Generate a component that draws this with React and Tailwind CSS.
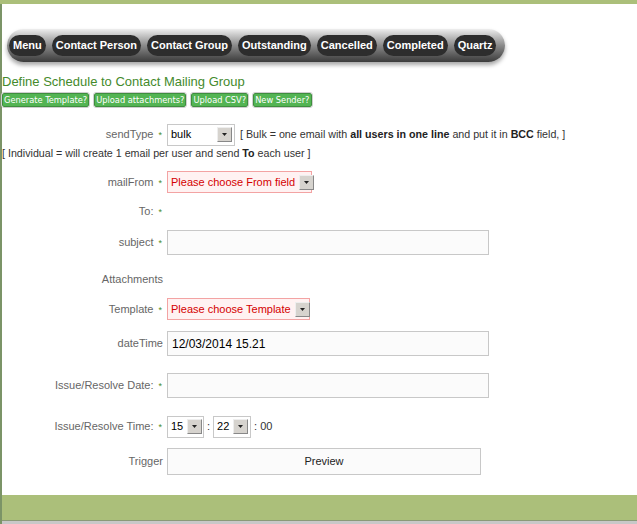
import React from "react";

const navItems = ["Menu", "Contact Person", "Contact Group", "Outstanding", "Cancelled", "Completed", "Quartz"];
const helpButtons = ["Generate Template?", "Upload attachments?", "Upload CSV?", "New Sender?"];

function Star() {
	return <span className="ml-[5px] mr-[2px] text-[9px] text-[#4a8c2a]">*</span>;
}

function Label({ text, star }) {
	return (
		<div className="w-[162px] shrink-0 text-right text-[11px] text-[#666]">
			{text}
			{star ? <Star /> : <span className="mr-[1px]" />}
		</div>
	);
}

function Arrow() {
	return (
		<span className="flex h-[15px] w-[15px] shrink-0 items-center justify-center border border-t-[#eee] border-l-[#eee] border-r-[#888] border-b-[#888] bg-[#d6d3ce]">
			<svg width="5" height="3" viewBox="0 0 5 3">
				<path d="M0 0h5L2.5 3z" fill="#222" />
			</svg>
		</span>
	);
}

function Select({ value, width, error }) {
	return (
		<div
			className={
				"flex h-[22px] items-center justify-between border pl-[3px] pr-[2px] text-[11px] " +
				(error ? "border-[#f3a3a3] bg-[#fff2f2] text-[#d40000]" : "border-[#c8c8c8] bg-white text-black")
			}
			style={{ width }}
		>
			<span className="mr-[4px] whitespace-nowrap">{value}</span>
			<Arrow />
		</div>
	);
}

function TextInput({ value }) {
	return (
		<div className="flex h-[25px] w-[322px] items-center border border-[#c8c8c8] bg-[#fbfbfb] px-[4px] text-[12px] text-black">
			{value}
		</div>
	);
}

export default function App() {
	return (
		<div className="flex h-[524px] w-[637px] flex-col overflow-hidden bg-white font-['Liberation_Sans',Arial,sans-serif]">
			<div className="h-[4px] bg-[#abbf7a]" />
			<div className="flex flex-1 flex-col border-l-2 border-[#7b9467]">
				{/* nav */}
				<div className="mt-[25px] ml-[5px] flex h-[33px] w-[498px] items-center gap-[6px] rounded-full bg-gradient-to-b from-[#eeeeee] via-[#8a8a8a] to-[#3c3c3c] px-[2px] shadow-[0_3px_4px_rgba(0,0,0,0.35)]">
					{navItems.map((item) => (
						<div
							key={item}
							className="flex h-[21px] items-center whitespace-nowrap rounded-full bg-[#2d2d2d] px-[4px] text-[11px] font-bold text-white"
						>
							{item}
						</div>
					))}
				</div>

				<h1 className="mt-[12px] text-[13px] leading-[16px] text-[#448a2c]">Define Schedule to Contact Mailing Group</h1>
				<div className="mt-[3px] flex gap-[5px]">
					{helpButtons.map((b) => (
						<div
							key={b}
							className="flex h-[14px] items-center whitespace-nowrap rounded-[2px] border border-[#3e8e3e] bg-[#53b453] px-[1px] font-['DejaVu_Sans_Condensed','DejaVu_Sans',sans-serif] text-[9.2px] text-white outline outline-1 outline-[#cfcfcf]"
						>
							{b}
						</div>
					))}
				</div>

				{/* form */}
				<div className="mt-[17px] flex h-[21px] items-center">
					<Label text="sendType" star />
					<div className="ml-[3px]">
						<Select value="bulk" width={68} />
					</div>
					<span className="ml-[5px] whitespace-nowrap text-[10.7px] text-[#333]">
						[ Bulk = one email with <b className="text-[#222]">all users in one line</b> and put it in{" "}
						<b className="text-[#222]">BCC</b> field, ]
					</span>
				</div>
				<div className="mt-[1px] h-[14px] text-[10.7px] leading-[14px] text-[#333]">
					[ Individual = will create 1 email per user and send <b className="text-[#222]">To</b> each user ]
				</div>

				<div className="mt-[11px] flex h-[22px] items-center">
					<Label text="mailFrom" star />
					<div className="ml-[3px]">
						<Select value="Please choose From field" width={145} error />
					</div>
				</div>

				<div className="mt-[10px] flex h-[16px] items-center">
					<Label text="To:" star />
				</div>

				<div className="mt-[11px] flex h-[25px] items-center">
					<Label text="subject" star />
					<div className="ml-[3px]">
						<TextInput value="" />
					</div>
				</div>

				<div className="mt-[16px] flex h-[16px] items-center">
					<Label text="Attachments" />
				</div>

				<div className="mt-[11px] flex h-[22px] items-center">
					<Label text="Template" star />
					<div className="ml-[3px]">
						<Select value="Please choose Template" width={143} error />
					</div>
				</div>

				<div className="mt-[11px] flex h-[25px] items-center">
					<Label text="dateTime" />
					<div className="ml-[3px]">
						<TextInput value="12/03/2014 15.21" />
					</div>
				</div>

				<div className="mt-[17px] flex h-[25px] items-center">
					<Label text="Issue/Resolve Date:" star />
					<div className="ml-[3px]">
						<TextInput value="" />
					</div>
				</div>

				<div className="mt-[17px] flex h-[23px] items-center text-[11px] text-[#333]">
					<Label text="Issue/Resolve Time:" star />
					<div className="ml-[3px]">
						<Select value="15" width={37} />
					</div>
					<span className="mx-[3px]">:</span>
					<Select value="22" width={38} />
					<span className="ml-[3px]">: 00</span>
				</div>

				<div className="mt-[10px] flex h-[27px] items-center">
					<Label text="Trigger" />
					<div className="ml-[3px] flex h-[27px] w-[314px] items-center justify-center border border-[#c8c8c8] bg-[#fbfbfb] text-[11px] text-[#222]">
						Preview
					</div>
				</div>

				<div className="mt-[20px] h-[25px] bg-[#abbf7a]" />
				<div className="h-[1px] bg-[#8a9a78]" />
				<div className="flex-1 bg-[#c8c8c8]" />
			</div>
		</div>
	);
}
